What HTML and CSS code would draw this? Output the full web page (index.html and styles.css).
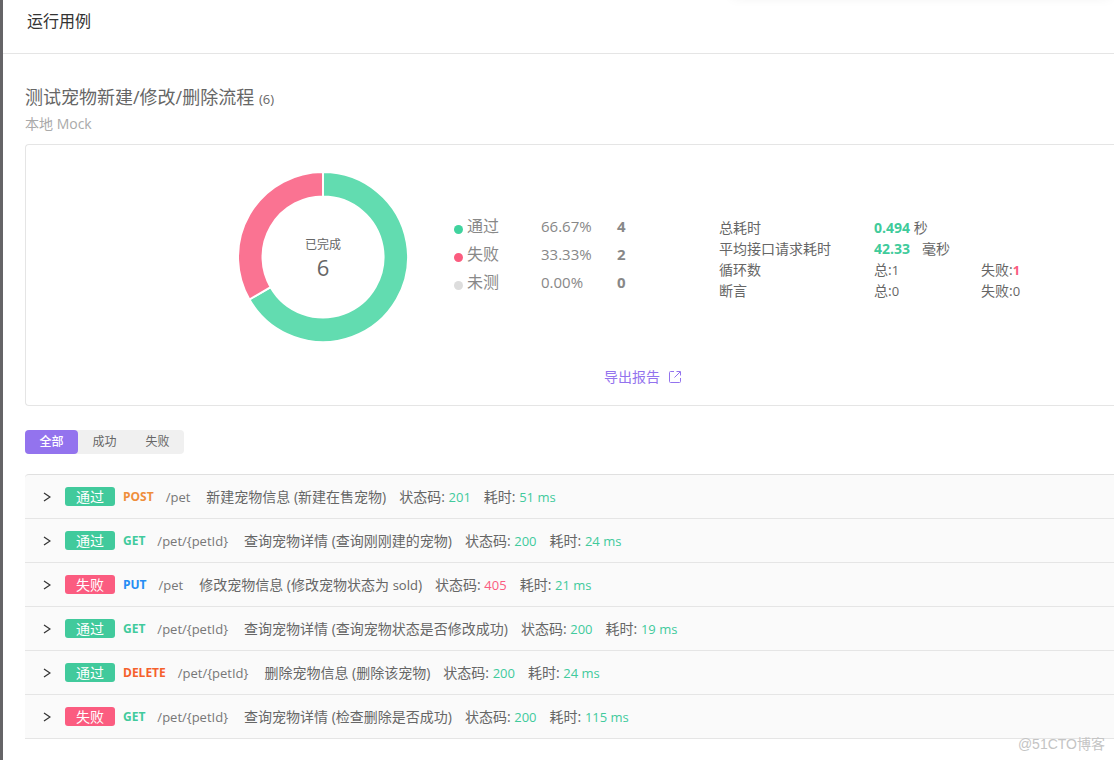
FILE: index.html
```
<!DOCTYPE html>
<html lang="zh-CN">
<head>
<meta charset="utf-8">
<meta name="viewport" content="width=device-width, initial-scale=1">
<title>运行用例</title>
<link rel="stylesheet" href="styles.css">
</head>
<body>
<div class="drawer">
  <header class="drawer-header"><h1 class="drawer-title">运行用例</h1></header>
  <main class="content">
    <h2 class="case-title">测试宠物新建/修改/删除流程 <span class="case-count">(6)</span></h2>
    <p class="case-env">本地 Mock</p>

    <section class="card">
      <div class="overview">
        <div class="donut">
          <svg class="donut-chart" viewBox="0 0 170 170" aria-hidden="true">
            <path fill="#62dcb0" stroke="#fff" stroke-width="2" d="M85 0A85 85 0 1 1 11.4 127.5L32.6 115.2A60.5 60.5 0 1 0 85 24.5Z"/>
            <path fill="#fa7392" stroke="#fff" stroke-width="2" d="M85 0A85 85 0 0 0 11.4 127.5L32.6 115.2A60.5 60.5 0 0 1 85 24.5Z"/>
          </svg>
          <div class="donut-label"><span class="donut-text">已完成</span><span class="donut-value">6</span></div>
        </div>
        <table class="legend">
          <tr><th scope="row"><i class="dot dot-pass"></i>通过</th><td>66.67%</td><td class="num">4</td></tr>
          <tr><th scope="row"><i class="dot dot-fail"></i>失败</th><td>33.33%</td><td class="num">2</td></tr>
          <tr><th scope="row"><i class="dot dot-none"></i>未测</th><td>0.00%</td><td class="num">0</td></tr>
        </table>
        <table class="stats">
          <tr><th scope="row">总耗时</th><td colspan="2"><b class="strong-pass">0.494</b> 秒</td></tr>
          <tr><th scope="row">平均接口请求耗时</th><td colspan="2"><b class="strong-pass unit-gap">42.33</b>毫秒</td></tr>
          <tr><th scope="row">循环数</th><td>总:<span class="latin">1</span></td><td>失败:<b class="strong-fail">1</b></td></tr>
          <tr><th scope="row">断言</th><td>总:<span class="latin">0</span></td><td>失败:<span class="latin">0</span></td></tr>
        </table>
      </div>
      <a class="export" href="#export">导出报告
        <svg class="export-icon" viewBox="0 0 14 14" fill="none" stroke="currentColor" aria-hidden="true"><path d="M6 1.5H2.5a1 1 0 0 0-1 1v9a1 1 0 0 0 1 1h9a1 1 0 0 0 1-1V8M6.5 7.5l5.5-5.5M8.5 1.5h4v4"/></svg>
      </a>
    </section>

    <div class="tabs" role="group" aria-label="结果筛选">
      <button class="tab tab-active" type="button" aria-pressed="true">全部</button>
      <button class="tab" type="button" aria-pressed="false">成功</button>
      <button class="tab" type="button" aria-pressed="false">失败</button>
    </div>

    <ul class="results">
      <li class="row"><button class="toggle" type="button" aria-label="展开"><svg class="chevron" viewBox="0 0 8 10"><path d="M1 1l6 4-6 4"/></svg></button><span class="badge badge-pass">通过</span><span class="method post">POST</span><span class="path">/pet</span><span class="name">新建宠物信息 (新建在售宠物)</span><span class="meta">状态码: <span class="ok">201</span></span><span class="meta">耗时: <span class="ok">51 ms</span></span></li>
      <li class="row"><button class="toggle" type="button" aria-label="展开"><svg class="chevron" viewBox="0 0 8 10"><path d="M1 1l6 4-6 4"/></svg></button><span class="badge badge-pass">通过</span><span class="method get">GET</span><span class="path">/pet/{petId}</span><span class="name">查询宠物详情 (查询刚刚建的宠物)</span><span class="meta">状态码: <span class="ok">200</span></span><span class="meta">耗时: <span class="ok">24 ms</span></span></li>
      <li class="row"><button class="toggle" type="button" aria-label="展开"><svg class="chevron" viewBox="0 0 8 10"><path d="M1 1l6 4-6 4"/></svg></button><span class="badge badge-fail">失败</span><span class="method put">PUT</span><span class="path">/pet</span><span class="name">修改宠物信息 (修改宠物状态为 <span class="latin">sold</span>)</span><span class="meta">状态码: <span class="bad">405</span></span><span class="meta">耗时: <span class="ok">21 ms</span></span></li>
      <li class="row"><button class="toggle" type="button" aria-label="展开"><svg class="chevron" viewBox="0 0 8 10"><path d="M1 1l6 4-6 4"/></svg></button><span class="badge badge-pass">通过</span><span class="method get">GET</span><span class="path">/pet/{petId}</span><span class="name">查询宠物详情 (查询宠物状态是否修改成功)</span><span class="meta">状态码: <span class="ok">200</span></span><span class="meta">耗时: <span class="ok">19 ms</span></span></li>
      <li class="row"><button class="toggle" type="button" aria-label="展开"><svg class="chevron" viewBox="0 0 8 10"><path d="M1 1l6 4-6 4"/></svg></button><span class="badge badge-pass">通过</span><span class="method delete">DELETE</span><span class="path">/pet/{petId}</span><span class="name">删除宠物信息 (删除该宠物)</span><span class="meta">状态码: <span class="ok">200</span></span><span class="meta">耗时: <span class="ok">24 ms</span></span></li>
      <li class="row"><button class="toggle" type="button" aria-label="展开"><svg class="chevron" viewBox="0 0 8 10"><path d="M1 1l6 4-6 4"/></svg></button><span class="badge badge-fail">失败</span><span class="method get">GET</span><span class="path">/pet/{petId}</span><span class="name">查询宠物详情 (检查删除是否成功)</span><span class="meta">状态码: <span class="ok">200</span></span><span class="meta">耗时: <span class="ok">115 ms</span></span></li>
    </ul>
  </main>
  <div class="watermark">@51CTO博客</div>
</div>
</body>
</html>
```

FILE: styles.css
```
* { box-sizing: border-box; }
body {
  margin: 0;
  background: #fff;
  color: #666;
  font: 14px/20px "Open Sans", "Noto Sans CJK SC", sans-serif;
}
h1, h2, p, ul { margin: 0; padding: 0; font-weight: 400; }
button { font-family: inherit; border: 0; padding: 0; cursor: pointer; }
th { font-weight: 400; text-align: left; }
th, td { padding: 0; }
table { border-collapse: collapse; }
.latin { font-size: 13px; }

.drawer {
  position: relative;
  min-height: 100vh;
  border-left: 3px solid #656467;
  overflow: hidden;
}
.drawer-header {
  height: 54px;
  padding: 9px 24px;
  border-bottom: 1px solid #e5e5e5;
}
.drawer-header::before {
  content: "";
  position: absolute;
  top: -20px;
  right: 4px;
  width: 378px;
  height: 18px;
  box-shadow: 0 0 12px rgba(0, 0, 0, .06);
}
.drawer-title { font-size: 16px; line-height: 24px; color: #333; }
.content { padding: 30px 0 0 22px; }
.case-title { font-size: 18px; line-height: 26px; }
.case-count { font-size: 13px; }
.case-env { margin: 2px 0 10px; line-height: 20px; color: #aaa; }

.card {
  height: 262px;
  border: 1px solid #e5e5e5;
  border-right: 0;
  border-radius: 4px 0 0 4px;
}
.overview {
  display: flex;
  align-items: center;
  padding: 27px 0 0 212px;
}
.donut { display: grid; flex: none; width: 170px; place-items: center; }
.donut-chart { grid-area: 1 / 1; width: 170px; height: 170px; }
.donut-label { grid-area: 1 / 1; display: flex; flex-direction: column; align-items: center; }
.donut-text { font-size: 12px; line-height: 20px; }
.donut-value { font-size: 22px; line-height: 24px; }
.legend { flex: none; width: 200px; margin: 0 0 6px 46px; color: #888; font-size: 15px; }
.legend tr { height: 28px; }
.legend th { width: 87px; font-size: 16px; }
.legend td { width: 76px; }
.legend .num { width: 37px; font-weight: 700; }
.dot { display: inline-block; width: 9px; height: 9px; margin-right: 4px; border-radius: 50%; vertical-align: -2px; }
.dot-pass { background: #40d39e; }
.dot-fail { background: #fb5c7f; }
.dot-none { background: #ddd; }
.stats { flex: none; width: 369px; margin: 4px 0 0 65px; line-height: 20px; }
.stats tr { height: 21px; }
.stats th { width: 155px; }
.stats td { width: 107px; }
.strong-pass { color: #40cb9b; }
.strong-fail { color: #fb5c7f; font-size: 13px; }
.unit-gap { margin-right: 12px; }
.export {
  display: flex;
  align-items: center;
  width: 80px;
  margin: 25px 0 0 578px;
  gap: 8px;
  color: #9373ee;
  text-decoration: none;
  white-space: nowrap;
}
.export-icon { flex: none; width: 14px; height: 14px; }

.tabs {
  display: inline-flex;
  margin: 24px 0 20px;
  border-radius: 4px;
  background: #f0f0f0;
  vertical-align: top;
}
.tab { width: 53px; height: 24px; border-radius: 4px; background: none; color: #666; font-size: 12px; line-height: 24px; }
.tab-active { background: #9373ee; color: #fff; font-weight: 500; }

.results { list-style: none; border-top: 1px solid #e0e0e0; border-radius: 4px 0 0 0; background: #fafafa; }
.row {
  display: flex;
  align-items: center;
  height: 44px;
  padding-left: 18px;
  border-bottom: 1px solid #e5e5e5;
  white-space: nowrap;
}
.toggle { display: flex; width: 22px; height: 20px; align-items: center; background: none; }
.chevron { width: 8px; height: 10px; fill: none; stroke: #333; stroke-width: 1.3; }
.badge { width: 50px; height: 19px; border-radius: 3px; color: #fff; line-height: 19px; text-align: center; }
.badge-pass { background: #41ca9c; }
.badge-fail { background: #fb5c80; }
.method { margin: 0 12px 0 8px; font-size: 12px; font-weight: 700; }
.post { color: #ef8e3b; }
.get { color: #41ca9c; }
.put { color: #248cf4; }
.delete { color: #f5602b; }
.path { margin-right: 16px; font-size: 13px; color: #777; }
.meta { margin-left: 13px; }
.ok, .bad { font-size: 13px; }
.ok { color: #41ca9c; }
.bad { color: #fb5c80; }

.watermark {
  position: absolute;
  right: 9px;
  bottom: 6px;
  color: #c4c4c4;
  font: 14px/20px "Liberation Sans", "Noto Sans CJK SC", sans-serif;
}
```
